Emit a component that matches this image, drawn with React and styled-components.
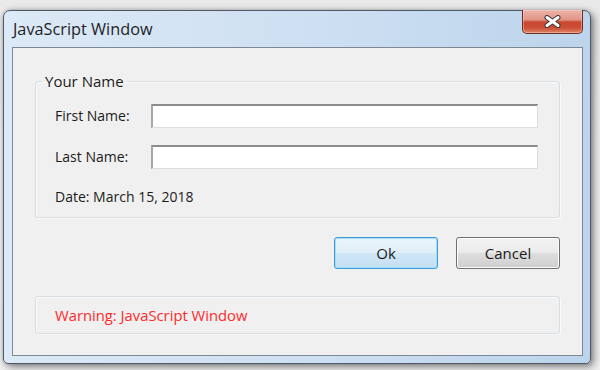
import React from "react";
import styled, { createGlobalStyle } from "styled-components";

const Global = createGlobalStyle`
  html, body { margin: 0; padding: 0; }
  body {
    width: 600px;
    height: 370px;
    overflow: hidden;
    background: linear-gradient(180deg, #e9e9e9 0%, #f3f3f3 40%, #f1f1f1 100%);
    font-family: "Open Sans", "Noto Sans", sans-serif;
    color: #1b1b1b;
  }
  * { box-sizing: border-box; }
`;

const Page = styled.div`
  padding: 10px 0 0 3px;
`;

const Window = styled.div`
  width: 588px;
  height: 354px;
  border: 1px solid #4d5966;
  border-radius: 7px 7px 5px 5px;
  padding: 0 7px 7px 8px;
  display: flex;
  flex-direction: column;
  background: linear-gradient(90deg, #dce9f6 0%, #cddff2 55%, #bcd4ec 100%);
  box-shadow: 3px 3px 8px rgba(0, 0, 0, 0.45), 0 0 4px rgba(0, 0, 0, 0.2);
`;

const TitleBar = styled.div`
  height: 36px;
  display: flex;
  align-items: flex-start;
  flex-shrink: 0;
`;

const Title = styled.div`
  padding: 7px 0 0 1px;
  font-size: 16.3px;
  line-height: 22px;
  color: #1e1e1e;
`;

const CloseButton = styled.div`
  margin: -1px 0 0 auto;
  width: 61px;
  height: 24px;
  border: 1px solid #6e2b24;
  border-top: none;
  border-radius: 0 0 5px 5px;
  background: linear-gradient(
    180deg,
    #ebb4aa 0%,
    #e19585 42%,
    #c8462f 53%,
    #cd4f37 78%,
    #e0876b 100%
  );
  box-shadow: inset 0 0 0 1px rgba(255, 210, 200, 0.45);
  display: flex;
  align-items: center;
  justify-content: center;
`;

const Client = styled.div`
  flex: 1;
  border: 1px solid #7e8894;
  background: #f0f0f0;
  display: flex;
  flex-direction: column;
  padding: 24px 22px 0 22px;
`;

const Group = styled.fieldset`
  margin: 0;
  width: 525px;
  border: 1px solid #d6dde3;
  border-radius: 3px;
  box-shadow: inset 1px 1px 0 #fafafa, 1px 1px 0 #fafafa;
  padding: 14px 19px 11px 19px;
  display: flex;
  flex-direction: column;
`;

const Legend = styled.legend`
  margin-left: -13px;
  padding: 0 3px;
  font-size: 15px;
  line-height: 18px;
`;

const FieldRow = styled.div`
  display: flex;
  align-items: center;
  margin-bottom: ${(p) => p.$gap}px;
`;

const Label = styled.label`
  width: 96px;
  font-size: 14px;
  line-height: 18px;
`;

const TextBox = styled.input`
  width: 387px;
  height: 24px;
  background: #fff;
  border: 1px solid #dedede;
  border-top: 2px solid #8c8c8c;
  border-left: 2px solid #a7a7a7;
  outline: none;
  padding: 0 4px;
  font: inherit;
`;

const DateText = styled.div`
  font-size: 14px;
  line-height: 18px;
`;

const ButtonRow = styled.div`
  width: 525px;
  display: flex;
  justify-content: flex-end;
  gap: 18px;
  margin-top: 19px;
`;

const Button = styled.button`
  width: 104px;
  height: 32px;
  border-radius: 3px;
  font-family: inherit;
  font-size: 15px;
  color: #1b1b1b;
  padding: 0;
  border: 1px solid ${(p) => (p.$primary ? "#3c9bd8" : "#707070")};
  background: ${(p) =>
    p.$primary
      ? "linear-gradient(180deg, #eaf5fc 0%, #e0eff9 48%, #cfe6f6 52%, #c4e0f4 100%)"
      : "linear-gradient(180deg, #f2f2f2 0%, #ebebeb 48%, #dddddd 52%, #cfcfcf 100%)"};
  box-shadow: ${(p) =>
    p.$primary
      ? "inset 0 0 0 1px #a9dcf7"
      : "inset 0 0 0 1px #fbfbfb"};
`;

const WarningBox = styled.div`
  margin-top: 27px;
  width: 525px;
  height: 38px;
  border: 1px solid #d6dde3;
  border-radius: 3px;
  box-shadow: inset 1px 1px 0 #fafafa, 1px 1px 0 #fafafa;
  padding: 0 19px;
  display: flex;
  align-items: center;
  color: #ff2a2a;
  font-size: 14.8px;
`;

function CloseGlyph() {
  return (
    <svg width="17" height="13" viewBox="0 0 17 13">
      <path d="M3 2.5 L14 10.5 M14 2.5 L3 10.5" stroke="#3a3a3a" strokeWidth="5" strokeLinecap="round" />
      <path d="M3 2.5 L14 10.5 M14 2.5 L3 10.5" stroke="#ffffff" strokeWidth="3" strokeLinecap="round" />
    </svg>
  );
}

export default function App() {
  return (
    <Page>
      <Global />
      <Window>
        <TitleBar>
          <Title>JavaScript Window</Title>
          <CloseButton>
            <CloseGlyph />
          </CloseButton>
        </TitleBar>
        <Client>
          <Group>
            <Legend>Your Name</Legend>
            <FieldRow $gap={17}>
              <Label>First Name:</Label>
              <TextBox />
            </FieldRow>
            <FieldRow $gap={19}>
              <Label>Last Name:</Label>
              <TextBox />
            </FieldRow>
            <DateText>Date: March 15, 2018</DateText>
          </Group>
          <ButtonRow>
            <Button $primary>Ok</Button>
            <Button>Cancel</Button>
          </ButtonRow>
          <WarningBox>Warning: JavaScript Window</WarningBox>
        </Client>
      </Window>
    </Page>
  );
}
